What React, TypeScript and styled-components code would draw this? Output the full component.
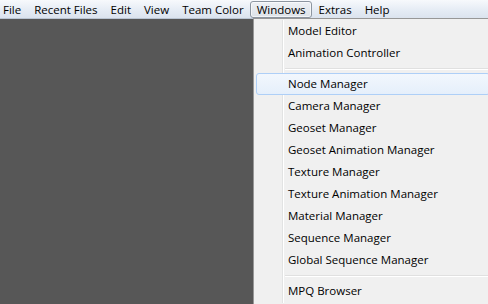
import React from "react";
import styled, { createGlobalStyle } from "styled-components";

const Global = createGlobalStyle`
  html, body { margin: 0; padding: 0; }
  body { width: 488px; height: 304px; overflow: hidden; background: #575757;
    font-family: "Open Sans", "Noto Sans", sans-serif; font-size: 11.5px; color: #000; }
`;

const Screen = styled.div`
  position: relative;
  width: 488px;
  height: 304px;
  background: #575757;
`;

const MenuBar = styled.div`
  height: 18px;
  display: flex;
  align-items: center;
  background: linear-gradient(#f7f9fc, #e4ebf4 60%, #dbe3ee);
  border-bottom: 1px solid #b9c4d2;
`;

const BarItem = styled.div<{ $open?: boolean }>`
  height: 17px;
  line-height: 15px;
  padding: 0 5.5px;
  box-sizing: border-box;
  border: 1px solid ${p => (p.$open ? "#8d96a1" : "transparent")};
  border-radius: 3px;
  background: ${p => (p.$open ? "linear-gradient(#eef1f5, #dde2e8)" : "transparent")};
  box-shadow: ${p => (p.$open ? "inset 0 0 0 1px rgba(255,255,255,0.6)" : "none")};
  white-space: nowrap;
  &:first-child { padding-left: 2px; }
`;

const Dropdown = styled.div`
  position: absolute;
  left: 253px;
  top: 18px;
  width: 240px;
  box-sizing: border-box;
  background: #f0f0f0;
  border: 1px solid #979797;
  padding: 1px 2px 2px;
  display: flex;
  flex-direction: column;
  box-shadow: 2px 2px 2px rgba(0,0,0,0.25);
  &::before {
    content: "";
    position: absolute;
    left: 28px;
    top: 1px;
    bottom: 1px;
    width: 1px;
    background: #e2e3e3;
    box-shadow: 1px 0 0 #ffffff;
  }
`;

const Item = styled.div<{ $hover?: boolean }>`
  position: relative;
  flex: none;
  height: 22px;
  line-height: 20px;
  padding-left: 31px;
  box-sizing: border-box;
  white-space: nowrap;
  border: 1px solid ${p => (p.$hover ? "#aecff7" : "transparent")};
  border-radius: 3px;
  background: ${p => (p.$hover ? "linear-gradient(#f2f7fd, #e5effb)" : "transparent")};
  z-index: 1;
`;

const Separator = styled.div`
  flex: none;
  height: 9px;
  display: flex;
  align-items: center;
  padding-left: 29px;
  &::after {
    content: "";
    flex: 1;
    height: 1px;
    background: #e0e0e0;
    box-shadow: 0 1px 0 #ffffff;
  }
`;

const bar = ["File", "Recent Files", "Edit", "View", "Team Color", "Windows", "Extras", "Help"];

type Entry = { label: string; hover?: boolean } | "sep";
const entries: Entry[] = [
  { label: "Model Editor" },
  { label: "Animation Controller" },
  "sep",
  { label: "Node Manager", hover: true },
  { label: "Camera Manager" },
  { label: "Geoset Manager" },
  { label: "Geoset Animation Manager" },
  { label: "Texture Manager" },
  { label: "Texture Animation Manager" },
  { label: "Material Manager" },
  { label: "Sequence Manager" },
  { label: "Global Sequence Manager" },
  "sep",
  { label: "MPQ Browser" },
];

export default function App() {
  return (
    <Screen>
      <Global />
      <MenuBar>
        {bar.map(b => (
          <BarItem key={b} $open={b === "Windows"}>{b}</BarItem>
        ))}
      </MenuBar>
      <Dropdown>
        {entries.map((e, i) =>
          e === "sep" ? (
            <Separator key={i} />
          ) : (
            <Item key={i} $hover={e.hover}>{e.label}</Item>
          )
        )}
      </Dropdown>
    </Screen>
  );
}
